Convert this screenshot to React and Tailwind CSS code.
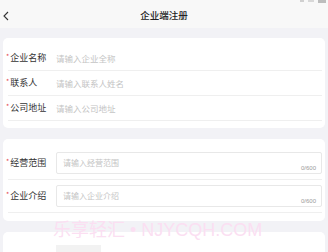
import React from 'react';

const font = { fontFamily: '"Noto Sans CJK SC", "Noto Sans", sans-serif' };

function Row({ label, placeholder }) {
  return (
    <>
      <div className="flex items-center h-[24px]">
        <div className="w-[50px] flex items-center text-[9px] text-[#333]">
          <span className="relative -top-[2px] text-[#e5484d] text-[7px] mr-[1px]">*</span>
          {label}
        </div>
        <div className="text-[8.5px] text-[#c4c4c4]">{placeholder}</div>
      </div>
      <div className="h-px bg-[#efefef] ml-[2px]" />
    </>
  );
}

function AreaRow({ label, placeholder }) {
  return (
    <div className="flex items-center">
      <div className="w-[50px] flex items-center text-[9px] text-[#333]">
        <span className="relative -top-[2px] text-[#e5484d] text-[7px] mr-[1px]">*</span>
        {label}
      </div>
      <div className="relative flex-1 h-[22px] border border-[#e8e8e8] rounded-[2px] pl-[6px] pt-[6px] text-[8px] text-[#c4c4c4] leading-none">
        {placeholder}
        <span
          className="absolute right-[5px] bottom-[2px] text-[6px] text-[#9a9a9a]"
          style={{ fontFamily: '"Liberation Sans", sans-serif' }}
        >
          0/600
        </span>
      </div>
    </div>
  );
}

export default function App() {
  return (
    <div className="relative w-[328px] h-[252px] overflow-hidden bg-[#f2f2f6]" style={font}>
      {/* header */}
      <div className="relative h-[28px] bg-[#f8f8f8] flex items-center justify-center">
        <svg className="absolute left-[2px] top-[11px]" width="8" height="10" viewBox="0 0 8 10">
          <polyline points="6,1 2,5 6,9" fill="none" stroke="#333" strokeWidth="1.1" />
        </svg>
        <div className="text-[9.5px] font-medium text-[#222] mt-[2px]">企业端注册</div>
        <div className="absolute right-[2px] top-0 flex gap-[4px]">
          <div className="w-[4px] h-[2px] bg-[#d0d0d0]" />
          <div className="w-[6px] h-[2px] bg-[#d8d8d8]" />
          <div className="w-[8px] h-[3px] bg-[#bdbdbd]" />
        </div>
      </div>

      {/* card 1 */}
      <div className="mx-[3px] mt-[10px] bg-white rounded-[5px] pl-[3px] pr-[3px] pt-[8px] pb-[7px]">
        <Row label="企业名称" placeholder="请输入企业全称" />
        <Row label="联系人" placeholder="请输入联系人姓名" />
        <Row label="公司地址" placeholder="请输入公司地址" />
      </div>

      {/* card 2 */}
      <div className="mx-[3px] mt-[11px] bg-white rounded-[5px] pl-[3px] pr-[3px] pt-[13px] pb-[8px]">
        <AreaRow label="经营范围" placeholder="请输入经营范围" />
        <div className="h-px bg-[#efefef] ml-[2px] mt-[5px] mb-[5px]" />
        <AreaRow label="企业介绍" placeholder="请输入企业介绍" />
        <div className="h-px bg-[#efefef] ml-[2px] mt-[5px]" />
      </div>

      {/* card 3 */}
      <div className="mx-[3px] mt-[11px] h-[40px] bg-white rounded-[5px] pt-[13px] pl-[53px]">
        <div className="w-[45px] h-[20px] bg-[#f2f2f2]" />
      </div>

      {/* watermark */}
      <div
        className="absolute left-[53px] top-[221px] text-[18px] leading-none text-[#fbdff2] whitespace-nowrap pointer-events-none"
        style={{ fontFamily: '"Liberation Sans", "Noto Sans CJK SC", sans-serif' }}
      >
        乐享轻汇 • NJYCQH.COM
      </div>
    </div>
  );
}
